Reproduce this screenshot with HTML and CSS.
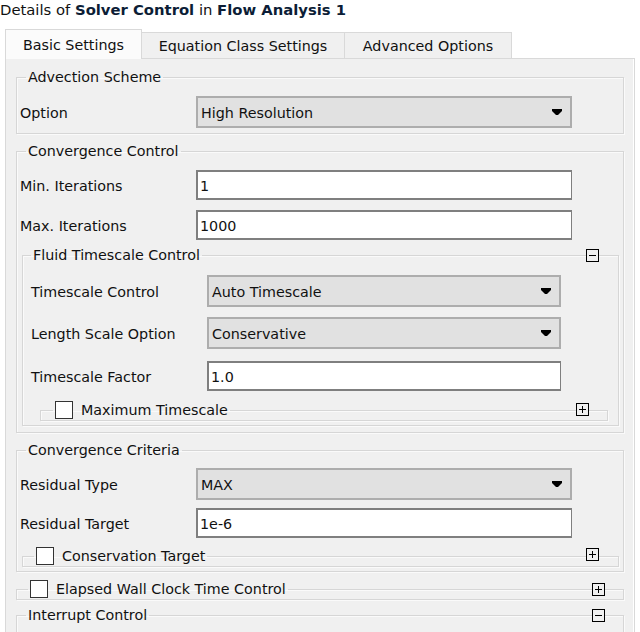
FILE: index.html
```html
<!DOCTYPE html>
<html>
<head>
<meta charset="utf-8">
<link rel="stylesheet" href="styles.css">
</head>
<body>
<div class="title">Details of <b>Solver Control</b> in <b>Flow Analysis 1</b></div>
<div class="tabs">
  <div class="tab active">Basic Settings</div>
  <div class="tab t2">Equation Class Settings</div>
  <div class="tab t3">Advanced Options</div>
</div>
<div class="panel">
  <div class="wrap">
    <fieldset class="grp">
      <legend class="lg">Advection Scheme</legend>
      <div class="body b-adv">
        <div class="row"><span class="lbl">Option</span><div class="dd">High Resolution<svg class="arr" width="10" height="6" viewBox="0 0 10 6"><path d="M0 0H10V2L6 6H4L0 2Z"/></svg></div></div>
      </div>
    </fieldset>
  </div>

  <div class="wrap gap">
    <fieldset class="grp">
      <legend class="lg">Convergence Control</legend>
      <div class="body b-conv">
        <div class="row"><span class="lbl">Min. Iterations</span><div class="inp">1</div></div>
        <div class="row r10"><span class="lbl">Max. Iterations</span><div class="inp">1000</div></div>
        <div class="wrap nested">
          <fieldset class="grp">
            <legend class="lg lg-n">Fluid Timescale Control</legend>
            <div class="body b-fluid">
              <div class="row nrow"><span class="lbl">Timescale Control</span><div class="dd">Auto Timescale<svg class="arr" width="10" height="6" viewBox="0 0 10 6"><path d="M0 0H10V2L6 6H4L0 2Z"/></svg></div></div>
              <div class="row nrow r10"><span class="lbl">Length Scale Option</span><div class="dd">Conservative<svg class="arr" width="10" height="6" viewBox="0 0 10 6"><path d="M0 0H10V2L6 6H4L0 2Z"/></svg></div></div>
              <div class="row nrow r12"><span class="lbl">Timescale Factor</span><div class="inp">1.0</div></div>
              <div class="wrap coll c-max">
                <fieldset class="grp cgrp">
                  <legend class="clg"><span class="cb"></span>Maximum Timescale</legend>
                  <div class="cbody"></div>
                </fieldset>
                <svg class="tog t-max" width="13" height="13" viewBox="0 0 13 13"><rect x="0.5" y="0.5" width="12" height="12"/><path d="M3 6.5H10M6.5 3V10"/></svg>
              </div>
            </div>
          </fieldset>
          <svg class="tog t-fluid" width="13" height="13" viewBox="0 0 13 13"><rect x="0.5" y="0.5" width="12" height="12"/><path d="M3 6.5H10"/></svg>
        </div>
      </div>
    </fieldset>
  </div>

  <div class="wrap gap">
    <fieldset class="grp">
      <legend class="lg">Convergence Criteria</legend>
      <div class="body b-crit">
        <div class="row"><span class="lbl">Residual Type</span><div class="dd">MAX<svg class="arr" width="10" height="6" viewBox="0 0 10 6"><path d="M0 0H10V2L6 6H4L0 2Z"/></svg></div></div>
        <div class="row r8"><span class="lbl">Residual Target</span><div class="inp">1e-6</div></div>
        <div class="wrap coll c-cons">
          <fieldset class="grp cgrp">
            <legend class="clg clg-cons"><span class="cb"></span>Conservation Target</legend>
            <div class="cbody"></div>
          </fieldset>
          <svg class="tog t-cons" width="13" height="13" viewBox="0 0 13 13"><rect x="0.5" y="0.5" width="12" height="12"/><path d="M3 6.5H10M6.5 3V10"/></svg>
        </div>
      </div>
    </fieldset>
  </div>

  <div class="wrap coll c-elap">
    <fieldset class="grp cgrp">
      <legend class="clg clg-elap"><span class="cb"></span>Elapsed Wall Clock Time Control</legend>
      <div class="cbody"></div>
    </fieldset>
    <svg class="tog t-elap" width="13" height="13" viewBox="0 0 13 13"><rect x="0.5" y="0.5" width="12" height="12"/><path d="M3 6.5H10M6.5 3V10"/></svg>
  </div>

  <div class="wrap c-int">
    <fieldset class="grp">
      <legend class="lg">Interrupt Control</legend>
      <div class="body b-int"></div>
    </fieldset>
    <svg class="tog t-int" width="13" height="13" viewBox="0 0 13 13"><rect x="0.5" y="0.5" width="12" height="12"/><path d="M3 6.5H10"/></svg>
  </div>
</div>
</body>
</html>
```

FILE: styles.css
```css
html, body {
  margin: 0;
  padding: 0;
  background: #ffffff;
}
body {
  font-family: "DejaVu Sans", sans-serif;
  font-size: 14.3px;
  color: #111;
  overflow: hidden;
  height: 632px;
}
.title {
  height: 29px;
  line-height: 20px;
  white-space: nowrap;
  font-size: 14.8px;
}
.title b {
  color: #0c1d36;
}
.tabs {
  display: flex;
  align-items: flex-end;
  height: 30px;
  margin-left: 5px;
  margin-bottom: -1px;
  position: relative;
  z-index: 1;
}
.tab {
  box-sizing: border-box;
  height: 27px;
  border: 1px solid #d9d9d9;
  background: #f0f0f0;
  display: flex;
  align-items: center;
  justify-content: center;
  white-space: nowrap;
  padding-top: 1px;
}
.tab.active {
  height: 30px;
  width: 137px;
  background: #fbfbfb;
  border-bottom: none;
}
.tab.t2 { width: 203px; border-left: none; }
.tab.t3 { width: 167px; border-left: none; }

.panel {
  margin-left: 5px;
  width: 630px;
  box-sizing: border-box;
  height: 640px;
  border: 1px solid #d9d9d9;
  background: #f0f0f0;
  padding: 10px 10px 0 10px;
  box-shadow: inset -1px 0 0 #fff;
}
.wrap {
  position: relative;
}
.gap { margin-top: 9px; }
.grp {
  margin: 0;
  padding: 0;
  min-width: 0;
  border: 1px solid #d6d6d6;
  box-shadow: inset 1px 1px 0 #fafafa, 1px 1px 0 #fafafa;
}
.lg {
  padding: 1px 2px 0 2px;
  margin-left: 9px;
  line-height: 15px;
  height: 16px;
  box-sizing: border-box;
  white-space: nowrap;
}
.lg-n { margin-left: 8px; }

.body { padding-left: 3px; }
.b-adv { padding-top: 11px; padding-bottom: 5px; }
.b-conv { padding-top: 11px; padding-bottom: 6px; }
.b-crit { padding-top: 10px; padding-bottom: 4px; }
.b-int { height: 40px; }

.row {
  display: grid;
  grid-template-columns: 176px 376px;
  align-items: center;
}
.r8 { margin-top: 8px; }
.r10 { margin-top: 10px; }
.r12 { margin-top: 12px; }
.lbl { white-space: nowrap; padding-top: 1px; }

.dd {
  box-sizing: border-box;
  height: 32px;
  border: 2px solid #adadad;
  background: #e1e1e1;
  padding: 1px 8px 0 3px;
  display: flex;
  align-items: center;
  justify-content: space-between;
}
.arr { display: block; fill: #000; margin-top: -1px; }
.inp {
  box-sizing: border-box;
  height: 30px;
  border: 2px solid #7f7f7f;
  border-right-width: 1px;
  background: #fff;
  padding: 1px 0 0 2px;
  display: flex;
  align-items: center;
}

.nested {
  margin: 7px 4px 0 2px;
}
.b-fluid { padding: 12px 0 4px 8px; }
.nrow { grid-template-columns: 176px 354px; }

.c-max { margin: 10px 10px 0 9px; }
.c-cons { margin: 9px 4px 0 2px; }
.c-elap { margin-top: 8px; }
.c-int { margin-top: 7px; }

.clg {
  margin-left: 12px;
  padding: 0 2px;
  height: 18px;
  line-height: 18px;
  display: flex;
  align-items: center;
  white-space: nowrap;
}
.clg-cons { margin-left: 11px; }
.clg-elap { margin-left: 11px; }
.cb {
  box-sizing: border-box;
  width: 18px;
  height: 18px;
  border: 1px solid #333;
  background: #fff;
  margin-right: 8px;
}
.cbody { height: 1px; }

.tog {
  position: absolute;
  display: block;
  fill: none;
  stroke: #000;
  stroke-width: 1;
  background: #f0f0f0;
}
.t-max { top: 2px; right: 19px; }
.t-fluid { top: 2px; right: 20px; }
.t-cons { top: 1px; right: 20px; }
.t-elap { top: 3px; right: 19px; }
.t-int { top: 2px; right: 19px; }
```
